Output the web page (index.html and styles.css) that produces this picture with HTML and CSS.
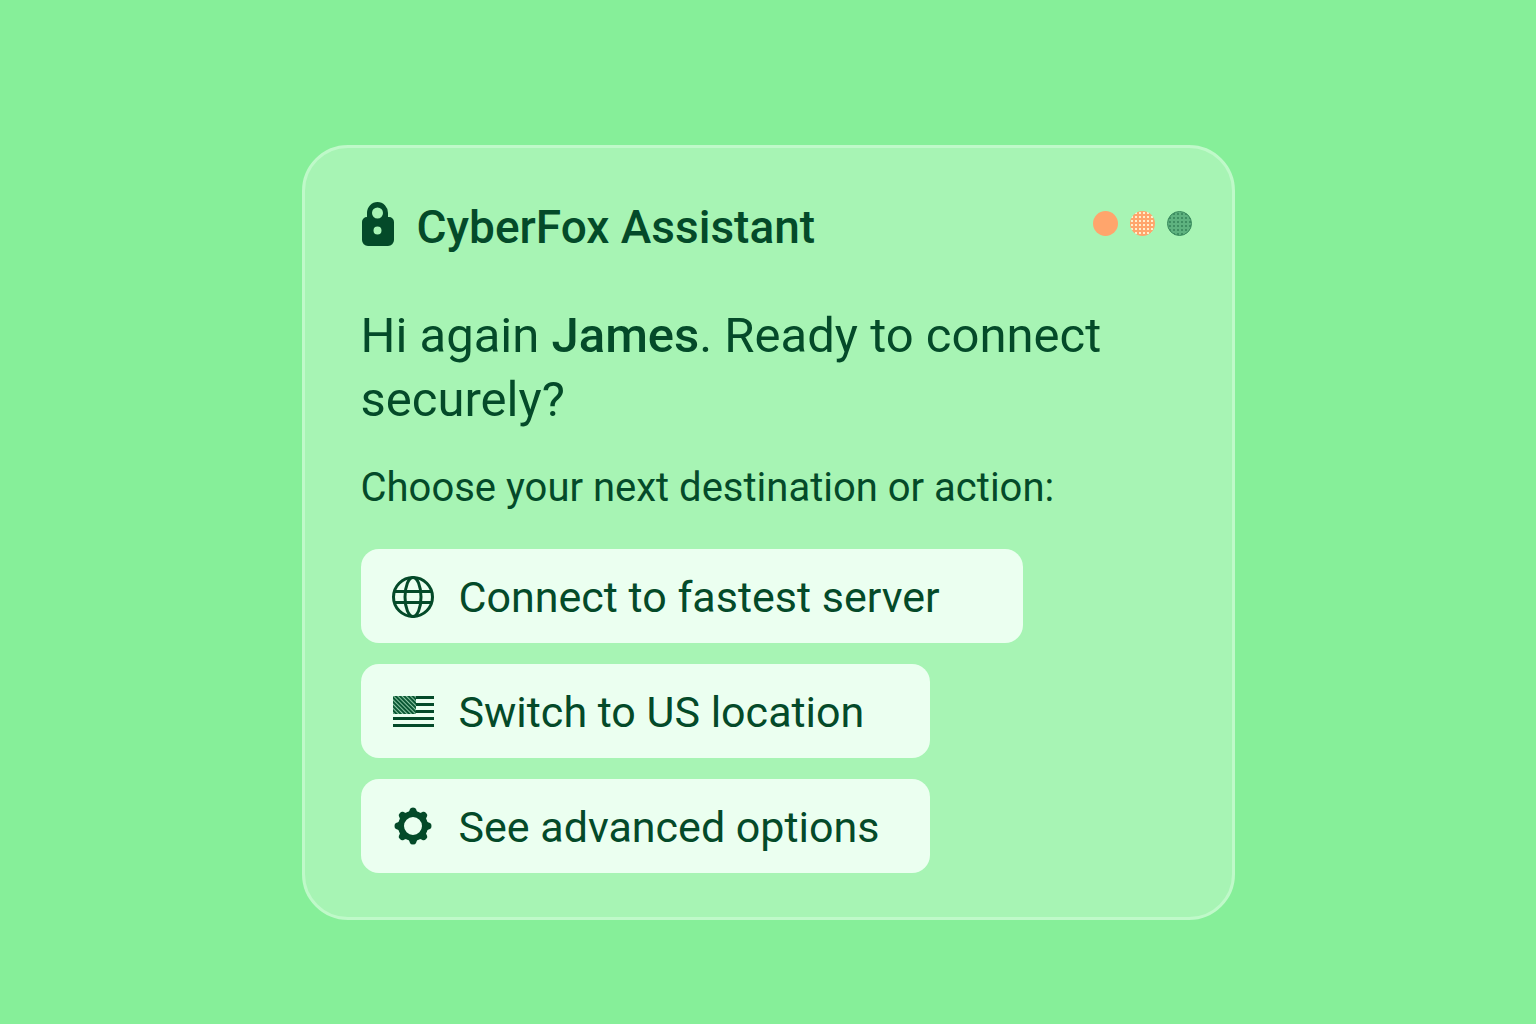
FILE: index.html
```html
<!DOCTYPE html>
<html lang="en">

<head>
    <meta charset="UTF-8">
    <meta name="viewport" content="width=device-width, initial-scale=1.0">
    <title>CyberFox Assistant</title>
    <link rel="stylesheet" href="styles.css">
</head>

<body>
    <main class="card">
        <header class="card-header">
            <svg class="lock" viewBox="0 0 34 46" aria-hidden="true">
                <path fill-rule="evenodd" d="M6 16V12a10.500 11 0 0 1 21 0v4h1a5 5 0 0 1 5 5v18a6 6 0 0 1-6 6H7a6 6 0 0 1-6-6V21a5 5 0 0 1 5-5zM16.500 6.500a5.500 5.500 0 1 0 0 11 5.500 5.500 0 0 0 0-11zM16.500 25.500a4 4 0 1 0 0 8 4 4 0 0 0 0-8z"/>
            </svg>
            <h1>CyberFox Assistant</h1>
            <div class="dots">
                <span class="dot orange"></span>
                <span class="dot speckled"></span>
                <span class="dot green"></span>
            </div>
        </header>

        <p class="greeting">Hi again <strong>James</strong>. Ready to connect securely?</p>
        <p class="prompt">Choose your next destination or action:</p>

        <div class="actions">
            <button type="button" class="action wide">
                <svg class="icon" viewBox="0 0 44 44" aria-hidden="true">
                    <g fill="none" stroke="#044a29" stroke-width="3">
                        <circle cx="22" cy="22" r="19.500"/>
                        <ellipse cx="22" cy="22" rx="8" ry="19.500"/>
                        <path d="M4 16.500h36M4 27.500h36"/>
                    </g>
                </svg>
                <span>Connect to fastest server</span>
            </button>
            <button type="button" class="action">
                <svg class="icon" viewBox="0 0 44 44" aria-hidden="true">
                    <defs>
                        <pattern id="canton" width="3" height="3" patternUnits="userSpaceOnUse" patternTransform="rotate(-45)">
                            <rect width="3" height="3" fill="#0b5834"/>
                            <rect width="1" height="3" fill="#8fc9a6"/>
                        </pattern>
                    </defs>
                    <path d="M25 6h18v3H25zM25 13h18v3H25zM25 20h18v3H25zM2 27h41v3H2zM2 34h41v3H2z"/>
                    <rect x="2" y="6" width="23" height="18" fill="url(#canton)"/>
                </svg>
                <span>Switch to US location</span>
            </button>
            <button type="button" class="action">
                <svg class="icon" viewBox="0 0 44 44" aria-hidden="true">
                    <g transform="translate(22 21)">
                        <circle r="12" fill="none" stroke="#044a29" stroke-width="6"/>
                        <g id="teeth">
                            <path d="M-5-13Q-3.500-15-3-17Q-2.500-18.500 0-18.500T3-17Q3.500-15 5-13z"/>
                            <path d="M-5-13Q-3.500-15-3-17Q-2.500-18.500 0-18.500T3-17Q3.500-15 5-13z" transform="rotate(45)"/>
                            <path d="M-5-13Q-3.500-15-3-17Q-2.500-18.500 0-18.500T3-17Q3.500-15 5-13z" transform="rotate(90)"/>
                            <path d="M-5-13Q-3.500-15-3-17Q-2.500-18.500 0-18.500T3-17Q3.500-15 5-13z" transform="rotate(135)"/>
                        </g>
                        <use href="#teeth" transform="rotate(180)"/>
                    </g>
                </svg>
                <span>See advanced options</span>
            </button>
        </div>
    </main>
</body>

</html>
```
FILE: styles.css
```css
* {
    margin: 0;
    padding: 0;
    box-sizing: border-box;
}

body {
    display: flex;
    align-items: center;
    justify-content: center;
    min-height: 100vh;
    padding: 64px 24px 24px;
    font-family: Roboto, "Liberation Sans", sans-serif;
    background-color: #86ef99;
    color: #044a29;
}

.card {
    width: 100%;
    max-width: 933px;
    padding: 44px 40px 44px 56px;
    background-color: #a7f4b4;
    border: 3px solid #bff9c9;
    border-radius: 46px;
}

.card-header {
    display: flex;
    align-items: center;
    gap: 22px;
    height: 64px;
}

.lock {
    width: 34px;
    height: 46px;
    fill: #044a29;
}

h1 {
    padding-top: 6px;
    font-size: 46px;
    font-weight: 500;
    line-height: 60px;
}

.dots {
    display: flex;
    gap: 12px;
    margin-left: auto;
}

.dot {
    width: 25px;
    height: 25px;
    border-radius: 50%;
}

.orange {
    background-color: #ffa56c;
}

.speckled {
    background: radial-gradient(circle, #ffeecb 1px, transparent 1px) 0 0 / 4px 4px #ffa56c;
}

.green {
    background: radial-gradient(circle, #3f8f62 1px, transparent 1px) 0 0 / 4px 4px #5eb27f;
    border: 1px solid #398a5d;
}

.greeting {
    margin-top: 48px;
    font-size: 49px;
    line-height: 64px;
}

.greeting strong {
    font-weight: 500;
}

.prompt {
    margin-top: 32px;
    font-size: 40px;
    line-height: 48px;
}

.actions {
    display: flex;
    flex-direction: column;
    align-items: flex-start;
    gap: 21px;
    margin-top: 37px;
}

.action {
    display: flex;
    align-items: center;
    gap: 24px;
    width: 569px;
    max-width: 100%;
    min-height: 94px;
    padding: 18px 30px 16px;
    border: none;
    border-radius: 18px;
    background-color: #ebfff0;
    color: inherit;
    font-family: inherit;
    font-size: 43px;
    text-align: left;
    cursor: pointer;
}

.action.wide {
    width: 662px;
}

.action:hover {
    background-color: #f6fff8;
}

.icon {
    flex: none;
    width: 44px;
    height: 44px;
    fill: #044a29;
}
```
